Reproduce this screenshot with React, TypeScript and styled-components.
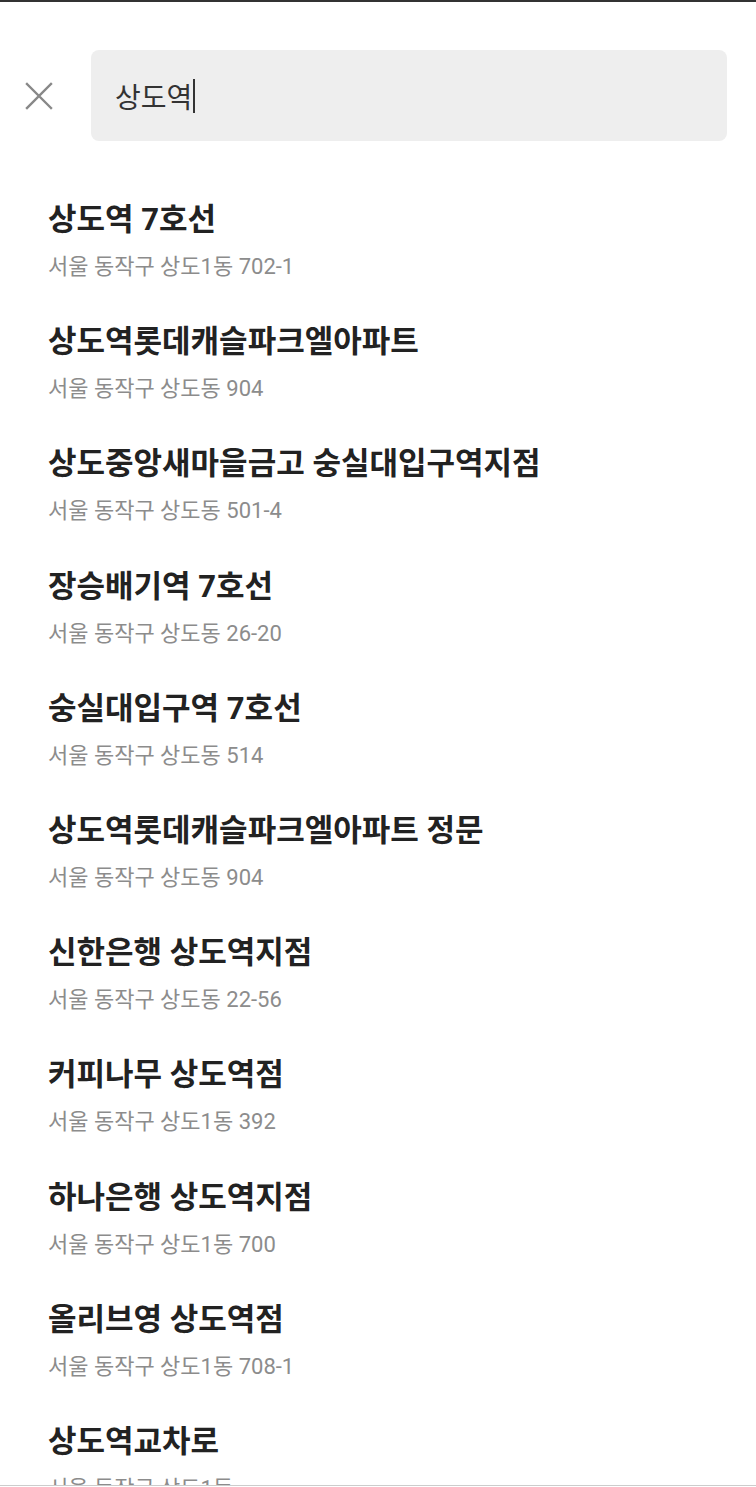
import styled, { createGlobalStyle } from 'styled-components';

const GlobalStyle = createGlobalStyle`
  html, body {
    margin: 0;
    padding: 0;
    background: #ffffff;
  }
  body {
    font-family: Roboto, "Noto Sans CJK KR", "Noto Sans", sans-serif;
    -webkit-font-smoothing: antialiased;
  }
`;

type Place = {
  name: string;
  address: string;
};

const places: Place[] = [
  { name: '상도역 7호선', address: '서울 동작구 상도1동 702-1' },
  { name: '상도역롯데캐슬파크엘아파트', address: '서울 동작구 상도동 904' },
  { name: '상도중앙새마을금고 숭실대입구역지점', address: '서울 동작구 상도동 501-4' },
  { name: '장승배기역 7호선', address: '서울 동작구 상도동 26-20' },
  { name: '숭실대입구역 7호선', address: '서울 동작구 상도동 514' },
  { name: '상도역롯데캐슬파크엘아파트 정문', address: '서울 동작구 상도동 904' },
  { name: '신한은행 상도역지점', address: '서울 동작구 상도동 22-56' },
  { name: '커피나무 상도역점', address: '서울 동작구 상도1동 392' },
  { name: '하나은행 상도역지점', address: '서울 동작구 상도1동 700' },
  { name: '올리브영 상도역점', address: '서울 동작구 상도1동 708-1' },
  { name: '상도역교차로', address: '서울 동작구 상도1동' },
];

const Screen = styled.div`
  position: relative;
  width: 756px;
  height: 1487px;
  overflow: hidden;
  border-top: 2px solid #333333;
  box-sizing: border-box;
  background: #ffffff;
`;

const SearchBar = styled.div`
  display: flex;
  align-items: center;
  padding: 48px 29px 0 22px;
`;

const CloseButton = styled.button`
  display: flex;
  align-items: center;
  justify-content: center;
  width: 34px;
  height: 34px;
  padding: 0;
  margin-right: 35px;
  border: none;
  background: none;
  color: #888888;
`;

const SearchField = styled.div`
  flex: 1;
  display: flex;
  align-items: center;
  height: 91px;
  padding: 0 24px;
  border-radius: 8px;
  background: #eeeeee;
  font-size: 28px;
  color: #333333;
`;

const Caret = styled.span`
  display: inline-block;
  width: 1.5px;
  height: 34px;
  margin-left: 1px;
  background: #333333;
`;

const ResultList = styled.ul`
  list-style: none;
  margin: 0;
  padding: 40px 0 0;
`;

const ResultItem = styled.li`
  padding: 21px 48px 22.2px;
`;

const PlaceName = styled.div`
  font-size: 31px;
  font-weight: 700;
  line-height: 36px;
  color: #222222;
`;

const PlaceAddress = styled.div`
  margin-top: 15px;
  font-size: 22px;
  line-height: 28px;
  color: #8c8c8c;
`;

const BottomEdge = styled.div`
  position: absolute;
  left: 0;
  right: 0;
  bottom: 0;
  height: 1px;
  border-top: 1px solid #cccccc;
  background: #ffffff;
`;

const CloseIcon = () => (
  <svg width="30" height="30" viewBox="0 0 30 30" fill="none">
    <path d="M3 3 L27 27 M27 3 L3 27" stroke="currentColor" strokeWidth="2.4" strokeLinecap="square" />
  </svg>
);

export default function App() {
  return (
    <>
      <GlobalStyle />
      <Screen>
        <SearchBar>
          <CloseButton aria-label="닫기">
            <CloseIcon />
          </CloseButton>
          <SearchField>
            상도역
            <Caret />
          </SearchField>
        </SearchBar>
        <ResultList>
          {places.map((place, i) => (
            <ResultItem key={i}>
              <PlaceName>{place.name}</PlaceName>
              <PlaceAddress>{place.address}</PlaceAddress>
            </ResultItem>
          ))}
        </ResultList>
        <BottomEdge />
      </Screen>
    </>
  );
}
